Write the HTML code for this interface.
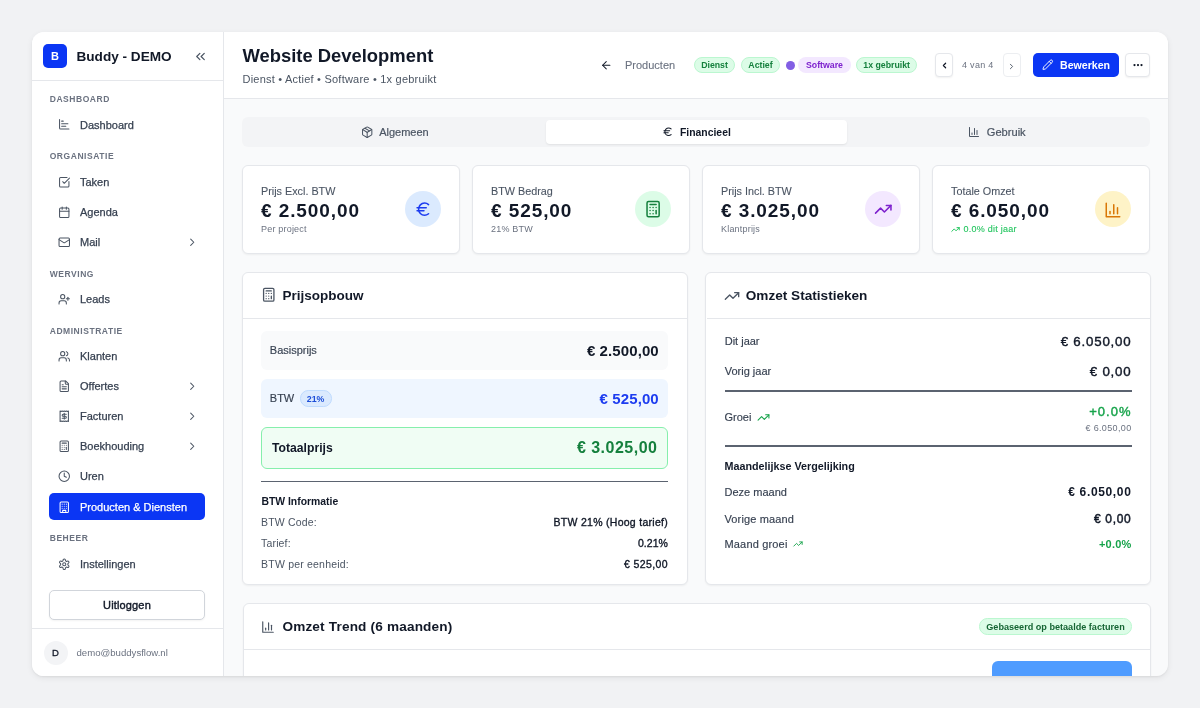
<!DOCTYPE html>
<html><head><meta charset="utf-8">
<style>
*{box-sizing:border-box;margin:0;padding:0}
html,body{width:1200px;height:708px;overflow:hidden;background:#f1f2f4;font-family:"Liberation Sans",sans-serif;color:#111827}
#shadow{position:absolute;left:32px;top:32px;width:1136px;height:644px;border-radius:12px;box-shadow:0 2px 6px rgba(0,0,0,.07),0 1px 2px rgba(0,0,0,.05)}
#app{position:absolute;left:32px;top:32px;width:1136px;height:644px;background:#f9fafb;border-radius:12px;overflow:hidden;will-change:transform}
#sidebg{position:absolute;left:0;top:0;width:191px;height:644px;background:#fff}
.t{position:absolute;white-space:nowrap;line-height:1}
.r{position:absolute}
svg{position:absolute;overflow:visible}
</style></head>
<body>
<div id="shadow"></div>
<div id="app"><div id="sidebg"></div>
<div class="r" style="left:191px;top:0px;width:1px;height:644px;background:#e5e7eb;"></div>
<div class="r" style="left:0px;top:48px;width:191px;height:1px;background:#e5e7eb;"></div>
<div class="r" style="left:11px;top:12px;width:24px;height:24px;background:#0b36f4;border-radius:5px;"></div>
<div class="t" style="top:19px;font-size:11px;color:#fff;font-weight:bold;left:-277px;width:600px;text-align:center;">B</div>
<div class="t" style="top:18px;font-size:13.6px;color:#111827;font-weight:bold;left:44.5px;">Buddy - DEMO</div>
<svg style="left:160.9px;top:17px" width="15" height="15" viewBox="0 0 24 24" fill="none" stroke="#4b5563" stroke-width="2" stroke-linecap="round" stroke-linejoin="round"><path d="m11 17-5-5 5-5"/><path d="m18 17-5-5 5-5"/></svg>
<div class="t" style="top:63px;font-size:8.5px;color:#6b7280;font-weight:bold;letter-spacing:0.55px;left:17.7px;">DASHBOARD</div>
<svg style="left:26.2px;top:86.3px" width="12.5" height="12.5" viewBox="0 0 24 24" fill="none" stroke="#4b5563" stroke-width="2" stroke-linecap="round" stroke-linejoin="round"><path d="M3 3v16a2 2 0 0 0 2 2h16"/><path d="M7 16h8"/><path d="M7 11h12"/><path d="M7 6h3"/></svg>
<div class="t" style="top:88px;font-size:11px;color:#374151;-webkit-text-stroke:0.25px #374151;left:48px;">Dashboard</div>
<div class="t" style="top:120px;font-size:8.5px;color:#6b7280;font-weight:bold;letter-spacing:0.55px;left:17.7px;">ORGANISATIE</div>
<svg style="left:26.2px;top:143.5px" width="12.5" height="12.5" viewBox="0 0 24 24" fill="none" stroke="#4b5563" stroke-width="2" stroke-linecap="round" stroke-linejoin="round"><path d="M21 10.656V19a2 2 0 0 1-2 2H5a2 2 0 0 1-2-2V5a2 2 0 0 1 2-2h12.344"/><path d="m9 11 3 3L22 4"/></svg>
<div class="t" style="top:145px;font-size:11px;color:#374151;-webkit-text-stroke:0.25px #374151;left:48px;">Taken</div>
<svg style="left:26.2px;top:173.5px" width="12.5" height="12.5" viewBox="0 0 24 24" fill="none" stroke="#4b5563" stroke-width="2" stroke-linecap="round" stroke-linejoin="round"><path d="M8 2v4"/><path d="M16 2v4"/><rect width="18" height="18" x="3" y="4" rx="2"/><path d="M3 10h18"/></svg>
<div class="t" style="top:175px;font-size:11px;color:#374151;-webkit-text-stroke:0.25px #374151;left:48px;">Agenda</div>
<svg style="left:26.2px;top:203.5px" width="12.5" height="12.5" viewBox="0 0 24 24" fill="none" stroke="#4b5563" stroke-width="2" stroke-linecap="round" stroke-linejoin="round"><rect width="20" height="16" x="2" y="4" rx="2"/><path d="m22 7-8.97 5.7a1.94 1.94 0 0 1-2.06 0L2 7"/></svg>
<div class="t" style="top:205px;font-size:11px;color:#374151;-webkit-text-stroke:0.25px #374151;left:48px;">Mail</div>
<svg style="left:153.5px;top:203.5px" width="12.5" height="12.5" viewBox="0 0 24 24" fill="none" stroke="#4b5563" stroke-width="2" stroke-linecap="round" stroke-linejoin="round"><path d="m9 18 6-6-6-6"/></svg>
<div class="t" style="top:238px;font-size:8.5px;color:#6b7280;font-weight:bold;letter-spacing:0.55px;left:17.7px;">WERVING</div>
<svg style="left:26.2px;top:260.9px" width="12.5" height="12.5" viewBox="0 0 24 24" fill="none" stroke="#4b5563" stroke-width="2" stroke-linecap="round" stroke-linejoin="round"><path d="M16 21v-2a4 4 0 0 0-4-4H6a4 4 0 0 0-4 4v2"/><circle cx="9" cy="7" r="4"/><line x1="19" x2="19" y1="8" y2="14"/><line x1="22" x2="16" y1="11" y2="11"/></svg>
<div class="t" style="top:262px;font-size:11px;color:#374151;-webkit-text-stroke:0.25px #374151;left:48px;">Leads</div>
<div class="t" style="top:295px;font-size:8.5px;color:#6b7280;font-weight:bold;letter-spacing:0.55px;left:17.7px;">ADMINISTRATIE</div>
<svg style="left:26.2px;top:318px" width="12.5" height="12.5" viewBox="0 0 24 24" fill="none" stroke="#4b5563" stroke-width="2" stroke-linecap="round" stroke-linejoin="round"><path d="M16 21v-2a4 4 0 0 0-4-4H6a4 4 0 0 0-4 4v2"/><circle cx="9" cy="7" r="4"/><path d="M22 21v-2a4 4 0 0 0-3-3.87"/><path d="M16 3.13a4 4 0 0 1 0 7.75"/></svg>
<div class="t" style="top:319px;font-size:11px;color:#374151;-webkit-text-stroke:0.25px #374151;left:48px;">Klanten</div>
<svg style="left:26.2px;top:347.6px" width="12.5" height="12.5" viewBox="0 0 24 24" fill="none" stroke="#4b5563" stroke-width="2" stroke-linecap="round" stroke-linejoin="round"><path d="M15 2H6a2 2 0 0 0-2 2v16a2 2 0 0 0 2 2h12a2 2 0 0 0 2-2V7Z"/><path d="M14 2v4a2 2 0 0 0 2 2h4"/><path d="M10 9H8"/><path d="M16 13H8"/><path d="M16 17H8"/></svg>
<div class="t" style="top:349px;font-size:11px;color:#374151;-webkit-text-stroke:0.25px #374151;left:48px;">Offertes</div>
<svg style="left:153.5px;top:347.6px" width="12.5" height="12.5" viewBox="0 0 24 24" fill="none" stroke="#4b5563" stroke-width="2" stroke-linecap="round" stroke-linejoin="round"><path d="m9 18 6-6-6-6"/></svg>
<svg style="left:26.2px;top:378.2px" width="12.5" height="12.5" viewBox="0 0 24 24" fill="none" stroke="#4b5563" stroke-width="2" stroke-linecap="round" stroke-linejoin="round"><path d="M4 2v20l2-1 2 1 2-1 2 1 2-1 2 1 2-1 2 1V2l-2 1-2-1-2 1-2-1-2 1-2-1-2 1Z"/><path d="M16 8h-6a2 2 0 1 0 0 4h4a2 2 0 1 1 0 4H8"/><path d="M12 17.5v-11"/></svg>
<div class="t" style="top:379px;font-size:11px;color:#374151;-webkit-text-stroke:0.25px #374151;left:48px;">Facturen</div>
<svg style="left:153.5px;top:378.2px" width="12.5" height="12.5" viewBox="0 0 24 24" fill="none" stroke="#4b5563" stroke-width="2" stroke-linecap="round" stroke-linejoin="round"><path d="m9 18 6-6-6-6"/></svg>
<svg style="left:26.2px;top:408.2px" width="12.5" height="12.5" viewBox="0 0 24 24" fill="none" stroke="#4b5563" stroke-width="2" stroke-linecap="round" stroke-linejoin="round"><rect width="16" height="20" x="4" y="2" rx="2"/><line x1="8" x2="16" y1="6" y2="6"/><line x1="16" x2="16" y1="14" y2="18"/><path d="M16 10h.01"/><path d="M12 10h.01"/><path d="M8 10h.01"/><path d="M12 14h.01"/><path d="M8 14h.01"/><path d="M12 18h.01"/><path d="M8 18h.01"/></svg>
<div class="t" style="top:409px;font-size:11px;color:#374151;-webkit-text-stroke:0.25px #374151;left:48px;">Boekhouding</div>
<svg style="left:153.5px;top:408.2px" width="12.5" height="12.5" viewBox="0 0 24 24" fill="none" stroke="#4b5563" stroke-width="2" stroke-linecap="round" stroke-linejoin="round"><path d="m9 18 6-6-6-6"/></svg>
<svg style="left:26.2px;top:438.2px" width="12.5" height="12.5" viewBox="0 0 24 24" fill="none" stroke="#4b5563" stroke-width="2" stroke-linecap="round" stroke-linejoin="round"><circle cx="12" cy="12" r="10"/><polyline points="12 6 12 12 16 14"/></svg>
<div class="t" style="top:439px;font-size:11px;color:#374151;-webkit-text-stroke:0.25px #374151;left:48px;">Uren</div>
<div class="r" style="left:17px;top:461px;width:156px;height:26.5px;background:#0b36f4;border-radius:5px;"></div>
<svg style="left:26.2px;top:468.5px" width="12.5" height="12.5" viewBox="0 0 24 24" fill="none" stroke="#fff" stroke-width="2" stroke-linecap="round" stroke-linejoin="round"><rect width="16" height="20" x="4" y="2" rx="2" ry="2"/><path d="M9 22v-4h6v4"/><path d="M8 6h.01"/><path d="M16 6h.01"/><path d="M12 6h.01"/><path d="M12 10h.01"/><path d="M12 14h.01"/><path d="M16 10h.01"/><path d="M16 14h.01"/><path d="M8 10h.01"/><path d="M8 14h.01"/></svg>
<div class="t" style="top:470px;font-size:11px;color:#fff;-webkit-text-stroke:0.25px #fff;left:48px;">Producten &amp; Diensten</div>
<div class="t" style="top:502px;font-size:8.5px;color:#6b7280;font-weight:bold;letter-spacing:0.55px;left:17.7px;">BEHEER</div>
<svg style="left:26.2px;top:525.9px" width="12.5" height="12.5" viewBox="0 0 24 24" fill="none" stroke="#4b5563" stroke-width="2" stroke-linecap="round" stroke-linejoin="round"><path d="M12.22 2h-.44a2 2 0 0 0-2 2v.18a2 2 0 0 1-1 1.73l-.43.25a2 2 0 0 1-2 0l-.15-.08a2 2 0 0 0-2.73.73l-.22.38a2 2 0 0 0 .73 2.73l.15.1a2 2 0 0 1 1 1.72v.51a2 2 0 0 1-1 1.74l-.15.09a2 2 0 0 0-.73 2.73l.22.38a2 2 0 0 0 2.73.73l.15-.08a2 2 0 0 1 2 0l.43.25a2 2 0 0 1 1 1.73V20a2 2 0 0 0 2 2h.44a2 2 0 0 0 2-2v-.18a2 2 0 0 1 1-1.73l.43-.25a2 2 0 0 1 2 0l.15.08a2 2 0 0 0 2.73-.73l.22-.39a2 2 0 0 0-.73-2.73l-.15-.08a2 2 0 0 1-1-1.74v-.5a2 2 0 0 1 1-1.74l.15-.09a2 2 0 0 0 .73-2.73l-.22-.38a2 2 0 0 0-2.73-.73l-.15.08a2 2 0 0 1-2 0l-.43-.25a2 2 0 0 1-1-1.73V4a2 2 0 0 0-2-2z"/><circle cx="12" cy="12" r="3"/></svg>
<div class="t" style="top:527px;font-size:11px;color:#374151;-webkit-text-stroke:0.25px #374151;left:48px;">Instellingen</div>
<div class="r" style="left:17.3px;top:557.6px;width:155.7px;height:30px;background:#fff;border:1px solid #d1d5db;border-radius:5px;box-shadow:0 1px 2px rgba(0,0,0,.05);"></div>
<div class="t" style="top:568px;font-size:11px;color:#111827;letter-spacing:0.15px;-webkit-text-stroke:0.4px #111827;left:-205px;width:600px;text-align:center;">Uitloggen</div>
<div class="r" style="left:0px;top:595.5px;width:191px;height:1px;background:#e5e7eb;"></div>
<div class="r" style="left:11.5px;top:609px;width:24px;height:24px;background:#f3f4f6;border-radius:12px;"></div>
<div class="t" style="top:616px;font-size:9.5px;color:#111827;-webkit-text-stroke:0.3px #111827;left:-276.5px;width:600px;text-align:center;">D</div>
<div class="t" style="top:616px;font-size:9.6px;color:#6b7280;left:44.5px;">demo@buddysflow.nl</div>
<div class="r" style="left:192px;top:0px;width:944px;height:66px;background:#fff;"></div>
<div class="r" style="left:192px;top:66px;width:944px;height:1px;background:#e5e7eb;"></div>
<div class="t" style="top:15px;font-size:18.4px;color:#111827;font-weight:bold;left:210.5px;">Website Development</div>
<div class="t" style="top:42px;font-size:11px;color:#4b5563;letter-spacing:0.22px;left:210.5px;">Dienst • Actief • Software • 1x gebruikt</div>
<svg style="left:567.8px;top:26.9px" width="12.5" height="12.5" viewBox="0 0 24 24" fill="none" stroke="#111827" stroke-width="2" stroke-linecap="round" stroke-linejoin="round"><path d="m12 19-7-7 7-7"/><path d="M19 12H5"/></svg>
<div class="t" style="top:28px;font-size:11px;color:#6b7280;-webkit-text-stroke:0.1px #6b7280;left:593px;">Producten</div>
<div class="r" style="left:662px;top:25px;width:41px;height:16.3px;background:#dcfce7;border:1px solid #bbf7d0;border-radius:8.2px;"></div>
<div class="t" style="top:29px;font-size:8.75px;color:#15803d;font-weight:bold;left:382.5px;width:600px;text-align:center;">Dienst</div>
<div class="r" style="left:709px;top:25px;width:39px;height:16.3px;background:#dcfce7;border:1px solid #bbf7d0;border-radius:8.2px;"></div>
<div class="t" style="top:29px;font-size:8.75px;color:#15803d;font-weight:bold;left:428.5px;width:600px;text-align:center;">Actief</div>
<div class="r" style="left:754px;top:28.5px;width:9.2px;height:9.2px;background:#825ee4;border-radius:5px;"></div>
<div class="r" style="left:766px;top:25px;width:53px;height:16.3px;background:#f3e8ff;border-radius:8.2px;"></div>
<div class="t" style="top:29px;font-size:8.75px;color:#7e22ce;font-weight:bold;left:492.5px;width:600px;text-align:center;">Software</div>
<div class="r" style="left:824.4px;top:25px;width:60.6px;height:16.3px;background:#dcfce7;border:1px solid #bbf7d0;border-radius:8.2px;"></div>
<div class="t" style="top:29px;font-size:8.75px;color:#15803d;font-weight:bold;left:554.7px;width:600px;text-align:center;">1x gebruikt</div>
<div class="r" style="left:903.2px;top:21.2px;width:17.5px;height:24px;background:#fff;border:1px solid #e5e7eb;border-radius:4px;box-shadow:0 1px 2px rgba(0,0,0,.06);"></div>
<svg style="left:907.5px;top:29.4px" width="9" height="9" viewBox="0 0 24 24" fill="none" stroke="#111827" stroke-width="3.2" stroke-linecap="round" stroke-linejoin="round"><path d="m15 18-6-6 6-6"/></svg>
<div class="t" style="top:29px;font-size:9px;color:#6b7280;letter-spacing:0.3px;left:930px;">4 van 4</div>
<div class="r" style="left:971.3px;top:21.2px;width:17.5px;height:24px;background:#fff;border:1px solid #eceef1;border-radius:4px;"></div>
<svg style="left:975.2px;top:29.6px" width="9" height="9" viewBox="0 0 24 24" fill="none" stroke="#4b5563" stroke-width="2.4" stroke-linecap="round" stroke-linejoin="round"><path d="m9 18 6-6-6-6"/></svg>
<div class="r" style="left:1001px;top:21.2px;width:86px;height:24px;background:#0b36f4;border-radius:5px;"></div>
<svg style="left:1010px;top:27px" width="11.5" height="11.5" viewBox="0 0 24 24" fill="none" stroke="#fff" stroke-width="2" stroke-linecap="round" stroke-linejoin="round"><path d="M21.174 6.812a1 1 0 0 0-3.986-3.987L3.842 16.174a2 2 0 0 0-.5.83l-1.321 4.352a.5.5 0 0 0 .623.622l4.353-1.32a2 2 0 0 0 .83-.497z"/><path d="m15 5 4 4"/></svg>
<div class="t" style="top:28px;font-size:10.6px;color:#fff;font-weight:bold;left:1028px;">Bewerken</div>
<div class="r" style="left:1093.3px;top:21.2px;width:25px;height:24px;background:#fff;border:1px solid #e5e7eb;border-radius:4px;box-shadow:0 1px 2px rgba(0,0,0,.06);"></div>
<svg style="left:1099.5px;top:27px" width="12" height="12" viewBox="0 0 24 24" fill="none" stroke="#111827" stroke-width="2.5" stroke-linecap="round" stroke-linejoin="round"><circle cx="12" cy="12" r="1"/><circle cx="19" cy="12" r="1"/><circle cx="5" cy="12" r="1"/></svg>
<div class="r" style="left:210px;top:85px;width:908px;height:29.5px;background:#f3f4f6;border-radius:6px;"></div>
<div class="r" style="left:513.6px;top:87.8px;width:301px;height:24.5px;background:#fff;border-radius:4px;box-shadow:0 1px 2px rgba(0,0,0,.08);"></div>
<svg style="left:328.7px;top:93.7px" width="12.4" height="12.4" viewBox="0 0 24 24" fill="none" stroke="#4b5563" stroke-width="2" stroke-linecap="round" stroke-linejoin="round"><path d="M11 21.73a2 2 0 0 0 2 0l7-4A2 2 0 0 0 21 16V8a2 2 0 0 0-1-1.73l-7-4a2 2 0 0 0-2 0l-7 4A2 2 0 0 0 3 8v8a2 2 0 0 0 1 1.73z"/><path d="M12 22V12"/><path d="m3.3 7 7.703 4.734a2 2 0 0 0 1.994 0L20.7 7"/><path d="m7.5 4.27 9 5.15"/></svg>
<div class="t" style="top:95px;font-size:11px;color:#4b5563;-webkit-text-stroke:0.2px #4b5563;left:347.2px;">Algemeen</div>
<svg style="left:630px;top:94px" width="11.5" height="11.5" viewBox="0 0 24 24" fill="none" stroke="#111827" stroke-width="2.2" stroke-linecap="round" stroke-linejoin="round"><path d="M4 10h12"/><path d="M4 14h9"/><path d="M19 6a7.7 7.7 0 0 0-5.2-2A7.9 7.9 0 0 0 6 12c0 4.4 3.5 8 7.8 8 2 0 3.8-.8 5.2-2"/></svg>
<div class="t" style="top:96px;font-size:10.4px;color:#111827;font-weight:bold;left:648px;">Financieel</div>
<svg style="left:936px;top:93.8px" width="12" height="12" viewBox="0 0 24 24" fill="none" stroke="#4b5563" stroke-width="2" stroke-linecap="round" stroke-linejoin="round"><path d="M3 3v18h18"/><path d="M18 17V9"/><path d="M13 17V5"/><path d="M8 17v-3"/></svg>
<div class="t" style="top:95px;font-size:11.1px;color:#4b5563;-webkit-text-stroke:0.2px #4b5563;left:954.8px;">Gebruik</div>
<div class="r" style="left:210px;top:133.4px;width:218px;height:89.1px;background:#fff;border:1px solid #e5e7eb;border-radius:6px;box-shadow:0 1px 2px rgba(0,0,0,.05);"></div>
<div class="t" style="top:154px;font-size:10.8px;color:#4b5563;-webkit-text-stroke:0.1px #4b5563;left:229px;">Prijs Excl. BTW</div>
<div class="t" style="top:169px;font-size:19px;color:#111827;font-weight:bold;letter-spacing:0.92px;left:229px;">€ 2.500,00</div>
<div class="t" style="top:193px;font-size:9px;color:#6b7280;letter-spacing:0.2px;left:229px;">Per project</div>
<div class="r" style="left:373.3px;top:159.4px;width:36px;height:36px;background:#dbeafe;border-radius:18px;"></div>
<svg style="left:381.9px;top:168.4px" width="18.4" height="18.4" viewBox="0 0 24 24" fill="none" stroke="#1d3cf0" stroke-width="2" stroke-linecap="round" stroke-linejoin="round"><path d="M4 10h12"/><path d="M4 14h9"/><path d="M19 6a7.7 7.7 0 0 0-5.2-2A7.9 7.9 0 0 0 6 12c0 4.4 3.5 8 7.8 8 2 0 3.8-.8 5.2-2"/></svg>
<div class="r" style="left:440px;top:133.4px;width:218px;height:89.1px;background:#fff;border:1px solid #e5e7eb;border-radius:6px;box-shadow:0 1px 2px rgba(0,0,0,.05);"></div>
<div class="t" style="top:154px;font-size:10.8px;color:#4b5563;-webkit-text-stroke:0.1px #4b5563;left:459px;">BTW Bedrag</div>
<div class="t" style="top:169px;font-size:19px;color:#111827;font-weight:bold;letter-spacing:0.92px;left:459px;">€ 525,00</div>
<div class="t" style="top:193px;font-size:9px;color:#6b7280;letter-spacing:0.2px;left:459px;">21% BTW</div>
<div class="r" style="left:603.3px;top:159.4px;width:36px;height:36px;background:#dcfce7;border-radius:18px;"></div>
<svg style="left:612.35px;top:168.15px" width="18.2" height="18.2" viewBox="0 0 24 24" fill="none" stroke="#15803d" stroke-width="2" stroke-linecap="round" stroke-linejoin="round"><rect width="16" height="20" x="4" y="2" rx="2"/><line x1="8" x2="16" y1="6" y2="6"/><line x1="16" x2="16" y1="14" y2="18"/><path d="M16 10h.01"/><path d="M12 10h.01"/><path d="M8 10h.01"/><path d="M12 14h.01"/><path d="M8 14h.01"/><path d="M12 18h.01"/><path d="M8 18h.01"/></svg>
<div class="r" style="left:670px;top:133.4px;width:218px;height:89.1px;background:#fff;border:1px solid #e5e7eb;border-radius:6px;box-shadow:0 1px 2px rgba(0,0,0,.05);"></div>
<div class="t" style="top:154px;font-size:10.8px;color:#4b5563;-webkit-text-stroke:0.1px #4b5563;left:689px;">Prijs Incl. BTW</div>
<div class="t" style="top:169px;font-size:19px;color:#111827;font-weight:bold;letter-spacing:0.92px;left:689px;">€ 3.025,00</div>
<div class="t" style="top:193px;font-size:9px;color:#6b7280;letter-spacing:0.2px;left:689px;">Klantprijs</div>
<div class="r" style="left:833.3px;top:159.4px;width:36px;height:36px;background:#f3e8ff;border-radius:18px;"></div>
<svg style="left:842px;top:168.2px" width="18.5" height="18.5" viewBox="0 0 24 24" fill="none" stroke="#7e22ce" stroke-width="2" stroke-linecap="round" stroke-linejoin="round"><polyline points="22 7 13.5 15.5 8.5 10.5 2 17"/><polyline points="16 7 22 7 22 13"/></svg>
<div class="r" style="left:900px;top:133.4px;width:218px;height:89.1px;background:#fff;border:1px solid #e5e7eb;border-radius:6px;box-shadow:0 1px 2px rgba(0,0,0,.05);"></div>
<div class="t" style="top:154px;font-size:10.8px;color:#4b5563;-webkit-text-stroke:0.1px #4b5563;left:919px;">Totale Omzet</div>
<div class="t" style="top:169px;font-size:19px;color:#111827;font-weight:bold;letter-spacing:0.92px;left:919px;">€ 6.050,00</div>
<svg style="left:919px;top:192.5px" width="9" height="9" viewBox="0 0 24 24" fill="none" stroke="#22c55e" stroke-width="2.6" stroke-linecap="round" stroke-linejoin="round"><polyline points="22 7 13.5 15.5 8.5 10.5 2 17"/><polyline points="16 7 22 7 22 13"/></svg>
<div class="t" style="top:193px;font-size:9px;color:#22c55e;letter-spacing:0.25px;-webkit-text-stroke:0.1px #22c55e;left:931.5px;">0.0% dit jaar</div>
<div class="r" style="left:1063.3px;top:159.4px;width:36px;height:36px;background:#fef3c7;border-radius:18px;"></div>
<svg style="left:1072.4px;top:168.5px" width="18" height="18" viewBox="0 0 24 24" fill="none" stroke="#d97706" stroke-width="2" stroke-linecap="round" stroke-linejoin="round"><path d="M3 3v18h18"/><path d="M18 17V9"/><path d="M13 17V5"/><path d="M8 17v-3"/></svg>
<div class="r" style="left:210px;top:239.9px;width:445.5px;height:313.2px;background:#fff;border:1px solid #e5e7eb;border-radius:6px;box-shadow:0 1px 2px rgba(0,0,0,.05);"></div>
<div class="r" style="left:211px;top:286px;width:443.5px;height:1px;background:#e5e7eb;"></div>
<svg style="left:228.5px;top:255.4px" width="15.5" height="15.5" viewBox="0 0 24 24" fill="none" stroke="#4b5563" stroke-width="2" stroke-linecap="round" stroke-linejoin="round"><rect width="16" height="20" x="4" y="2" rx="2"/><line x1="8" x2="16" y1="6" y2="6"/><line x1="16" x2="16" y1="14" y2="18"/><path d="M16 10h.01"/><path d="M12 10h.01"/><path d="M8 10h.01"/><path d="M12 14h.01"/><path d="M8 14h.01"/><path d="M12 18h.01"/><path d="M8 18h.01"/></svg>
<div class="t" style="top:257px;font-size:13.5px;color:#111827;font-weight:bold;left:250.4px;">Prijsopbouw</div>
<div class="r" style="left:229px;top:298.6px;width:407px;height:39px;background:#f9fafb;border-radius:6px;"></div>
<div class="t" style="top:313px;font-size:11px;color:#374151;-webkit-text-stroke:0.15px #374151;left:237.8px;">Basisprijs</div>
<div class="t" style="top:311px;font-size:15px;color:#111827;font-weight:bold;letter-spacing:0.1px;left:26.8px;width:600px;text-align:right;margin-right:-0.1px;">€ 2.500,00</div>
<div class="r" style="left:229px;top:347px;width:407px;height:38.5px;background:#eff6ff;border-radius:6px;"></div>
<div class="t" style="top:361px;font-size:11px;color:#374151;-webkit-text-stroke:0.15px #374151;left:237.8px;">BTW</div>
<div class="r" style="left:267.5px;top:358px;width:32px;height:16.5px;background:#dbeafe;border:1px solid #bfdbfe;border-radius:8.25px;"></div>
<div class="t" style="top:363px;font-size:8.8px;color:#1d4ed8;font-weight:bold;left:-16.4px;width:600px;text-align:center;">21%</div>
<div class="t" style="top:359px;font-size:15px;color:#1d3cf0;font-weight:bold;letter-spacing:0.1px;left:26.8px;width:600px;text-align:right;margin-right:-0.1px;">€ 525,00</div>
<div class="r" style="left:229px;top:395px;width:407px;height:41.8px;background:#f0fdf4;border:1.5px solid #86efac;border-radius:6px;"></div>
<div class="t" style="top:410px;font-size:12.2px;color:#111827;font-weight:bold;left:240px;">Totaalprijs</div>
<div class="t" style="top:408px;font-size:16px;color:#15803d;font-weight:bold;letter-spacing:0.5px;left:25.5px;width:600px;text-align:right;margin-right:-0.5px;">€ 3.025,00</div>
<div class="r" style="left:229px;top:448.6px;width:407px;height:1.56px;background:#5b6370;"></div>
<div class="t" style="top:465px;font-size:10.4px;color:#111827;font-weight:bold;left:229.4px;">BTW Informatie</div>
<div class="t" style="top:485px;font-size:10.5px;color:#4b5563;letter-spacing:0.15px;left:229.1px;">BTW Code:</div>
<div class="t" style="top:485px;font-size:10.5px;color:#111827;letter-spacing:0.28px;-webkit-text-stroke:0.35px #111827;left:36px;width:600px;text-align:right;margin-right:-0.28px;">BTW 21% (Hoog tarief)</div>
<div class="t" style="top:506px;font-size:10.5px;color:#4b5563;letter-spacing:0.15px;left:229.1px;">Tarief:</div>
<div class="t" style="top:506px;font-size:10.5px;color:#111827;letter-spacing:0.05px;-webkit-text-stroke:0.35px #111827;left:36px;width:600px;text-align:right;margin-right:-0.05px;">0.21%</div>
<div class="t" style="top:527px;font-size:10.5px;color:#4b5563;letter-spacing:0.2px;left:229.1px;">BTW per eenheid:</div>
<div class="t" style="top:527px;font-size:10.5px;color:#111827;letter-spacing:0.4px;-webkit-text-stroke:0.35px #111827;left:36px;width:600px;text-align:right;margin-right:-0.4px;">€ 525,00</div>
<div class="r" style="left:673px;top:239.9px;width:445.5px;height:313.2px;background:#fff;border:1px solid #e5e7eb;border-radius:6px;box-shadow:0 1px 2px rgba(0,0,0,.05);"></div>
<div class="r" style="left:674.5px;top:286px;width:443px;height:1px;background:#e5e7eb;"></div>
<svg style="left:691.5px;top:255.5px" width="16" height="16" viewBox="0 0 24 24" fill="none" stroke="#4b5563" stroke-width="2" stroke-linecap="round" stroke-linejoin="round"><polyline points="22 7 13.5 15.5 8.5 10.5 2 17"/><polyline points="16 7 22 7 22 13"/></svg>
<div class="t" style="top:257px;font-size:13.6px;color:#111827;font-weight:bold;left:713.8px;">Omzet Statistieken</div>
<div class="t" style="top:304px;font-size:11px;color:#374151;-webkit-text-stroke:0.15px #374151;left:692.7px;">Dit jaar</div>
<div class="t" style="top:303px;font-size:13.3px;color:#111827;letter-spacing:0.8px;-webkit-text-stroke:0.4px #111827;left:499.5px;width:600px;text-align:right;margin-right:-0.8px;">€ 6.050,00</div>
<div class="t" style="top:334px;font-size:11px;color:#374151;-webkit-text-stroke:0.15px #374151;left:692.7px;">Vorig jaar</div>
<div class="t" style="top:333px;font-size:13.3px;color:#111827;letter-spacing:0.8px;-webkit-text-stroke:0.4px #111827;left:499.5px;width:600px;text-align:right;margin-right:-0.8px;">€ 0,00</div>
<div class="r" style="left:692.5px;top:358.25px;width:407.3px;height:1.56px;background:#5b6370;"></div>
<div class="t" style="top:380px;font-size:11px;color:#374151;-webkit-text-stroke:0.15px #374151;left:692.5px;">Groei</div>
<svg style="left:725px;top:379px" width="13" height="13" viewBox="0 0 24 24" fill="none" stroke="#16a34a" stroke-width="2" stroke-linecap="round" stroke-linejoin="round"><polyline points="22 7 13.5 15.5 8.5 10.5 2 17"/><polyline points="16 7 22 7 22 13"/></svg>
<div class="t" style="top:373px;font-size:13px;color:#16a34a;letter-spacing:1px;-webkit-text-stroke:0.4px #16a34a;left:499.5px;width:600px;text-align:right;margin-right:-1px;">+0.0%</div>
<div class="t" style="top:392px;font-size:9px;color:#6b7280;letter-spacing:0.35px;left:499.5px;width:600px;text-align:right;margin-right:-0.35px;">€ 6.050,00</div>
<div class="r" style="left:692.5px;top:413.2px;width:407.3px;height:1.56px;background:#5b6370;"></div>
<div class="t" style="top:429px;font-size:10.75px;color:#111827;font-weight:bold;left:692.5px;">Maandelijkse Vergelijking</div>
<div class="t" style="top:455px;font-size:11px;color:#374151;-webkit-text-stroke:0.15px #374151;left:692.5px;">Deze maand</div>
<div class="t" style="top:454px;font-size:12px;color:#111827;font-weight:bold;letter-spacing:0.65px;left:499.5px;width:600px;text-align:right;margin-right:-0.65px;">€ 6.050,00</div>
<div class="t" style="top:482px;font-size:11px;color:#374151;letter-spacing:0.13px;-webkit-text-stroke:0.15px #374151;left:692.5px;">Vorige maand</div>
<div class="t" style="top:481px;font-size:12px;color:#111827;letter-spacing:0.7px;-webkit-text-stroke:0.45px #111827;left:499.5px;width:600px;text-align:right;margin-right:-0.7px;">€ 0,00</div>
<div class="t" style="top:507px;font-size:11px;color:#374151;letter-spacing:0.17px;-webkit-text-stroke:0.15px #374151;left:692.5px;">Maand groei</div>
<svg style="left:760.8px;top:507.2px" width="10" height="10" viewBox="0 0 24 24" fill="none" stroke="#16a34a" stroke-width="2.2" stroke-linecap="round" stroke-linejoin="round"><polyline points="22 7 13.5 15.5 8.5 10.5 2 17"/><polyline points="16 7 22 7 22 13"/></svg>
<div class="t" style="top:507px;font-size:11px;color:#16a34a;font-weight:bold;letter-spacing:0.2px;left:499.5px;width:600px;text-align:right;margin-right:-0.2px;">+0.0%</div>
<div class="r" style="left:210.5px;top:571.4px;width:908px;height:200px;background:#fff;border:1px solid #e5e7eb;border-radius:6px;box-shadow:0 1px 2px rgba(0,0,0,.05);"></div>
<div class="r" style="left:211.5px;top:617px;width:906px;height:1px;background:#e5e7eb;"></div>
<svg style="left:228.5px;top:587.5px" width="14" height="14" viewBox="0 0 24 24" fill="none" stroke="#4b5563" stroke-width="2" stroke-linecap="round" stroke-linejoin="round"><path d="M3 3v18h18"/><path d="M18 17V9"/><path d="M13 17V5"/><path d="M8 17v-3"/></svg>
<div class="t" style="top:588px;font-size:13.6px;color:#111827;font-weight:bold;letter-spacing:0.17px;left:250.4px;">Omzet Trend (6 maanden)</div>
<div class="r" style="left:947.2px;top:586px;width:152.5px;height:16.7px;background:#dcfce7;border:1px solid #bbf7d0;border-radius:8.3px;"></div>
<div class="t" style="top:591px;font-size:9.1px;color:#166534;font-weight:bold;left:723.5px;width:600px;text-align:center;">Gebaseerd op betaalde facturen</div>
<div class="r" style="left:959.7px;top:629.3px;width:140.3px;height:60px;background:#4f9cff;border-radius:6px;"></div>
</div>
</body></html>
